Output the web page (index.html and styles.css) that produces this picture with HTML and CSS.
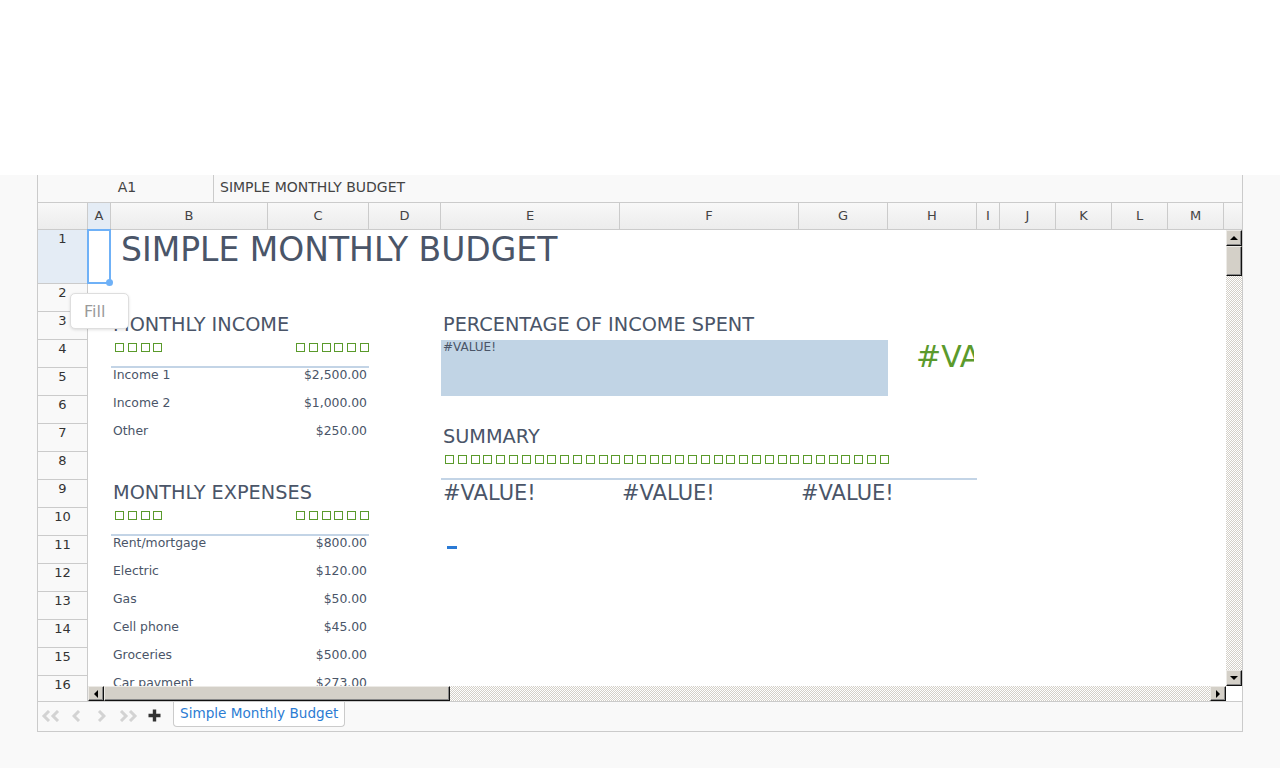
FILE: index.html
```html
<!DOCTYPE html>
<html lang="en">
<head>
<meta charset="utf-8">
<title>Simple Monthly Budget</title>
<link rel="stylesheet" href="styles.css">
</head>
<body>
<div class="top"></div>
<div class="sheet">
  <div class="fbar">
    <div class="namebox">A1</div>
    <div class="finput">SIMPLE MONTHLY BUDGET</div>
  </div>
  <div class="colhdr">
    <div class="corner"></div>
    <div class="sel">A</div><div>B</div><div>C</div><div>D</div><div>E</div><div>F</div><div>G</div><div>H</div><div>I</div><div>J</div><div>K</div><div>L</div><div>M</div><div class="rest"></div>
  </div>
  <div class="main">
    <div class="rowhdr">
      <div class="rh r1">1</div><div class="rh">2</div><div class="rh">3</div><div class="rh">4</div><div class="rh">5</div><div class="rh">6</div><div class="rh">7</div><div class="rh">8</div><div class="rh">9</div><div class="rh">10</div><div class="rh">11</div><div class="rh">12</div><div class="rh">13</div><div class="rh">14</div><div class="rh">15</div><div class="rh">16</div>
    </div>
    <div class="right">
      <div class="area">
        <div class="cells">
          <div class="title">SIMPLE MONTHLY BUDGET</div>

          <div class="head c-b r3">MONTHLY INCOME</div>
          <div class="head c-e r3">PERCENTAGE OF INCOME SPENT</div>

          <div class="sqs c-b1 r4"><i></i><i></i><i></i><i></i></div>
          <div class="sqs c-c1 r4 sq-right"><i></i><i></i><i></i><i></i><i></i><i></i></div>
          <div class="rule c-bc r4"></div>
          <div class="pbox">#VALUE!</div>
          <div class="pct">#VALUE!</div>

          <div class="lbl c-b1 r5">Income 1</div><div class="amt c-c1 r5">$2,500.00</div>
          <div class="lbl c-b1 r6">Income 2</div><div class="amt c-c1 r6">$1,000.00</div>
          <div class="lbl c-b1 r7">Other</div><div class="amt c-c1 r7">$250.00</div>

          <div class="head c-e r7">SUMMARY</div>
          <div class="sqs c-e1 r8 clip"><i></i><i></i><i></i><i></i><i></i><i></i><i></i><i></i><i></i><i></i><i></i><i></i><i></i><i></i></div>
          <div class="sqs c-f1 r8 clip"><i></i><i></i><i></i><i></i><i></i><i></i><i></i><i></i><i></i><i></i><i></i><i></i><i></i><i></i></div>
          <div class="sqs c-g1 r8"><i></i><i></i><i></i><i></i><i></i><i></i><i></i></div>
          <div class="rule c-eh r8"></div>

          <div class="head c-b r9">MONTHLY EXPENSES</div>
          <div class="val c-e1 r9">#VALUE!</div>
          <div class="val c-f1 r9">#VALUE!</div>
          <div class="val c-g1 r9">#VALUE!</div>

          <div class="sqs c-b1 r10"><i></i><i></i><i></i><i></i></div>
          <div class="sqs c-c1 r10 sq-right"><i></i><i></i><i></i><i></i><i></i><i></i></div>
          <div class="rule c-bc r10"></div>

          <div class="lbl c-b1 r11">Rent/mortgage</div><div class="amt c-c1 r11">$800.00</div>
          <div class="dash c-e1 r11"></div>
          <div class="lbl c-b1 r12">Electric</div><div class="amt c-c1 r12">$120.00</div>
          <div class="lbl c-b1 r13">Gas</div><div class="amt c-c1 r13">$50.00</div>
          <div class="lbl c-b1 r14">Cell phone</div><div class="amt c-c1 r14">$45.00</div>
          <div class="lbl c-b1 r15">Groceries</div><div class="amt c-c1 r15">$500.00</div>
          <div class="lbl c-b1 r16">Car payment</div><div class="amt c-c1 r16">$273.00</div>
        </div>
        <div class="vscroll">
          <div class="sbtn"><span class="tri up"></span></div>
          <div class="vthumb"></div>
          <div class="vtrack"></div>
          <div class="sbtn"><span class="tri down"></span></div>
        </div>
      </div>
      <div class="hbar">
        <div class="sbtn hb"><span class="tri left"></span></div>
        <div class="hthumb"></div>
        <div class="htrack"></div>
        <div class="sbtn hb"><span class="tri rightt"></span></div>
        <div class="scorner"></div>
      </div>
    </div>
  </div>
  <div class="tabbar">
    <svg class="nav n1" width="20" height="12" viewBox="0 0 20 12"><path d="M8 1 L3 6 L8 11 M17 1 L12 6 L17 11" fill="none" stroke="#d3d3d3" stroke-width="3"/></svg>
    <svg class="nav n2" width="9" height="12" viewBox="0 0 9 12"><path d="M7 1 L2 6 L7 11" fill="none" stroke="#d3d3d3" stroke-width="3"/></svg>
    <svg class="nav n3" width="9" height="12" viewBox="0 0 9 12"><path d="M2 1 L7 6 L2 11" fill="none" stroke="#d3d3d3" stroke-width="3"/></svg>
    <svg class="nav n4" width="20" height="12" viewBox="0 0 20 12"><path d="M3 1 L8 6 L3 11 M12 1 L17 6 L12 11" fill="none" stroke="#d3d3d3" stroke-width="3"/></svg>
    <svg class="nav n5" width="13" height="13" viewBox="0 0 13 13"><path d="M6.5 0.5 V12.5 M0.5 6.5 H12.5" fill="none" stroke="#333" stroke-width="3.4"/></svg>
    <div class="tab">Simple Monthly Budget</div>
  </div>
  <div class="selection"></div>
  <div class="handle"></div>
  <div class="filltip">Fill</div>
</div>
</body>
</html>
```

FILE: styles.css
```css
* { box-sizing: border-box; }
body {
  margin: 0;
  background: #f9f9f9;
  font-family: "DejaVu Sans", "Noto Sans", sans-serif;
}
.top { height: 175px; background: #fff; }

.sheet {
  position: relative;
  margin-left: 37px;
  width: 1206px;
  border: 1px solid #cbcbcb;
  border-top: 0;
  background: #f9f9f9;
}

/* formula bar */
.fbar {
  display: flex;
  height: 28px;
  border-bottom: 1px solid #cbcbcb;
  font-size: 14px;
  color: #444;
  line-height: 25px;
}
.namebox {
  width: 176px;
  border-right: 1px solid #cbcbcb;
  text-align: center;
  padding-left: 3px;
}
.finput { padding-left: 6px; }

/* column header */
.colhdr {
  display: grid;
  grid-template-columns: 50px 23px 157px 101px 72px 179px 179px 89px 89px 23px 56px 56px 56px 56px 1fr;
  height: 27px;
  border-bottom: 1px solid #cbcbcb;
  background: linear-gradient(#f8f8f8, #ececec);
}
.colhdr > div {
  border-right: 1px solid #cbcbcb;
  text-align: center;
  font-size: 13px;
  line-height: 26px;
  color: #444;
}
.colhdr > .rest { border-right: 0; }
.colhdr > .sel { background: #e4ecf5; }

/* main */
.main { display: flex; height: 471px; }
.rowhdr {
  width: 50px;
  flex: none;
  border-right: 1px solid #cbcbcb;
  overflow: hidden;
  background: #f9f9f9;
}
.rh {
  height: 28px;
  border-bottom: 1px solid #cbcbcb;
  text-align: center;
  font-size: 13px;
  line-height: 15px;
  padding-top: 1px;
  color: #333;
}
.rh.r1 { height: 54px; background: #e4ecf5; }

.right { width: 1154px; display: flex; flex-direction: column; }
.area { display: flex; height: 456px; }

.cells {
  width: 1138px;
  height: 456px;
  overflow: hidden;
  background: #fff;
  display: grid;
  grid-template-columns: 23px 157px 101px 72px 179px 179px 89px 89px 23px 56px 56px 56px 56px 1fr;
  grid-template-rows: 54px repeat(15, 28px);
  color: #4a5568;
  font-size: 12.4px;
  line-height: 14px;
  white-space: nowrap;
}
.cells > div { min-width: 0; }

.title {
  grid-column: 2 / 8;
  grid-row: 1;
  font-size: 33px;
  padding-left: 10px;
  line-height: normal;
}
.head { font-size: 19.3px; line-height: normal; padding: 1px 0 0 2px; }
.c-b { grid-column: 2 / 5; }
.c-e { grid-column: 5 / 8; }
.c-b1 { grid-column: 2; }
.c-c1 { grid-column: 3; }
.c-e1 { grid-column: 5; }
.c-f1 { grid-column: 6; }
.c-g1 { grid-column: 7; }
.c-bc { grid-column: 2 / 4; }
.c-eh { grid-column: 5 / 9; }
.r3 { grid-row: 3; } .r4 { grid-row: 4; } .r5 { grid-row: 5; } .r6 { grid-row: 6; }
.r7 { grid-row: 7; } .r8 { grid-row: 8; } .r9 { grid-row: 9; } .r10 { grid-row: 10; }
.r11 { grid-row: 11; } .r12 { grid-row: 12; } .r13 { grid-row: 13; } .r14 { grid-row: 14; }
.r15 { grid-row: 15; } .r16 { grid-row: 16; }

.sqs {
  display: flex;
  gap: 3.8px;
  padding: 3px 0 0 4px;
  align-items: flex-start;
}
.sqs i {
  flex: none;
  width: 9px;
  height: 9px;
  border: 1px solid #5a9a2b;
}
.sq-right { padding-left: 28px; }
.clip { overflow: hidden; }

.rule {
  align-self: end;
  height: 2px;
  background: #c3d4e6;
}

.pbox {
  grid-column: 5 / 8;
  grid-row: 4 / 6;
  background: #c1d4e5;
  font-size: 12px;
  padding: 0 0 0 2px;
}
.pct {
  grid-column: 8;
  grid-row: 4 / 6;
  overflow: hidden;
  font-size: 30px;
  line-height: normal;
  color: #5b9a2c;
  padding-left: 28px;
  margin: -1px 3px 0 0;
}

.lbl { padding-left: 2px; }
.amt { text-align: right; padding-right: 2px; }
.val { font-size: 21px; line-height: normal; padding: 1px 0 0 2px; }
.dash {
  width: 10px;
  height: 3px;
  background: #2a7ad5;
  margin: 10px 0 0 6px;
}

/* scrollbars */
.vscroll {
  width: 16px;
  display: flex;
  flex-direction: column;
}
.sbtn {
  width: 16px;
  height: 16px;
  flex: none;
  background: #d4d0c8;
  border: 1px solid;
  border-color: #eceae6 #111 #111 #eceae6;
  box-shadow: inset -1px -1px 0 #888;
  display: flex;
  align-items: center;
  justify-content: center;
}
.sbtn.hb { height: 15px; }
.vthumb, .hthumb {
  flex: none;
  background: #d4d0c8;
  border: 1px solid;
  border-color: #eceae6 #111 #111 #eceae6;
  box-shadow: inset -1px -1px 0 #888;
}
.vthumb { height: 30px; }
.vtrack, .htrack {
  flex: 1;
  background: repeating-conic-gradient(#d4d0c8 0 25%, #ffffff 0 50%) 0 0 / 2px 2px;
}
.hbar { display: flex; height: 15px; }
.hthumb { width: 346px; }
.scorner { width: 16px; background: #fff; flex: none; }

.tri { width: 0; height: 0; display: block; }
.tri.up { border-left: 4px solid transparent; border-right: 4px solid transparent; border-bottom: 4px solid #000; }
.tri.down { border-left: 4px solid transparent; border-right: 4px solid transparent; border-top: 4px solid #000; }
.tri.left { border-top: 4px solid transparent; border-bottom: 4px solid transparent; border-right: 4px solid #000; }
.tri.rightt { border-top: 4px solid transparent; border-bottom: 4px solid transparent; border-left: 4px solid #000; }

/* tab bar */
.tabbar {
  height: 30px;
  border-top: 1px solid #cbcbcb;
  display: flex;
  align-items: flex-start;
}
.nav { flex: none; margin-top: 8px; display: block; }
.n1 { margin-left: 3px; }
.n2 { margin-left: 11px; }
.n3 { margin-left: 16px; }
.n4 { margin-left: 12px; }
.n5 { margin-left: 10px; margin-top: 7px; }
.tab {
  margin-left: 12px;
  height: 25px;
  padding: 0 6px 0 6px;
  background: #fff;
  border: 1px solid #cbcbcb;
  border-top: 0;
  border-radius: 0 0 4px 4px;
  font-size: 13.6px;
  line-height: 22px;
  color: #2b7cd3;
}

/* overlays */
.selection {
  position: absolute;
  left: 49px;
  top: 54px;
  width: 24px;
  height: 55px;
  border: 2px solid #6fb1f7;
}
.handle {
  position: absolute;
  left: 68px;
  top: 104px;
  width: 7px;
  height: 7px;
  border-radius: 50%;
  background: #6fb1f7;
}
.filltip {
  position: absolute;
  left: 32px;
  top: 118px;
  width: 59px;
  height: 36px;
  background: #fff;
  border: 1px solid #dedede;
  border-radius: 5px;
  box-shadow: 0 1px 3px rgba(0, 0, 0, 0.12);
  font-size: 16px;
  line-height: 35px;
  padding-left: 13px;
  color: #9a9a9a;
}
```
